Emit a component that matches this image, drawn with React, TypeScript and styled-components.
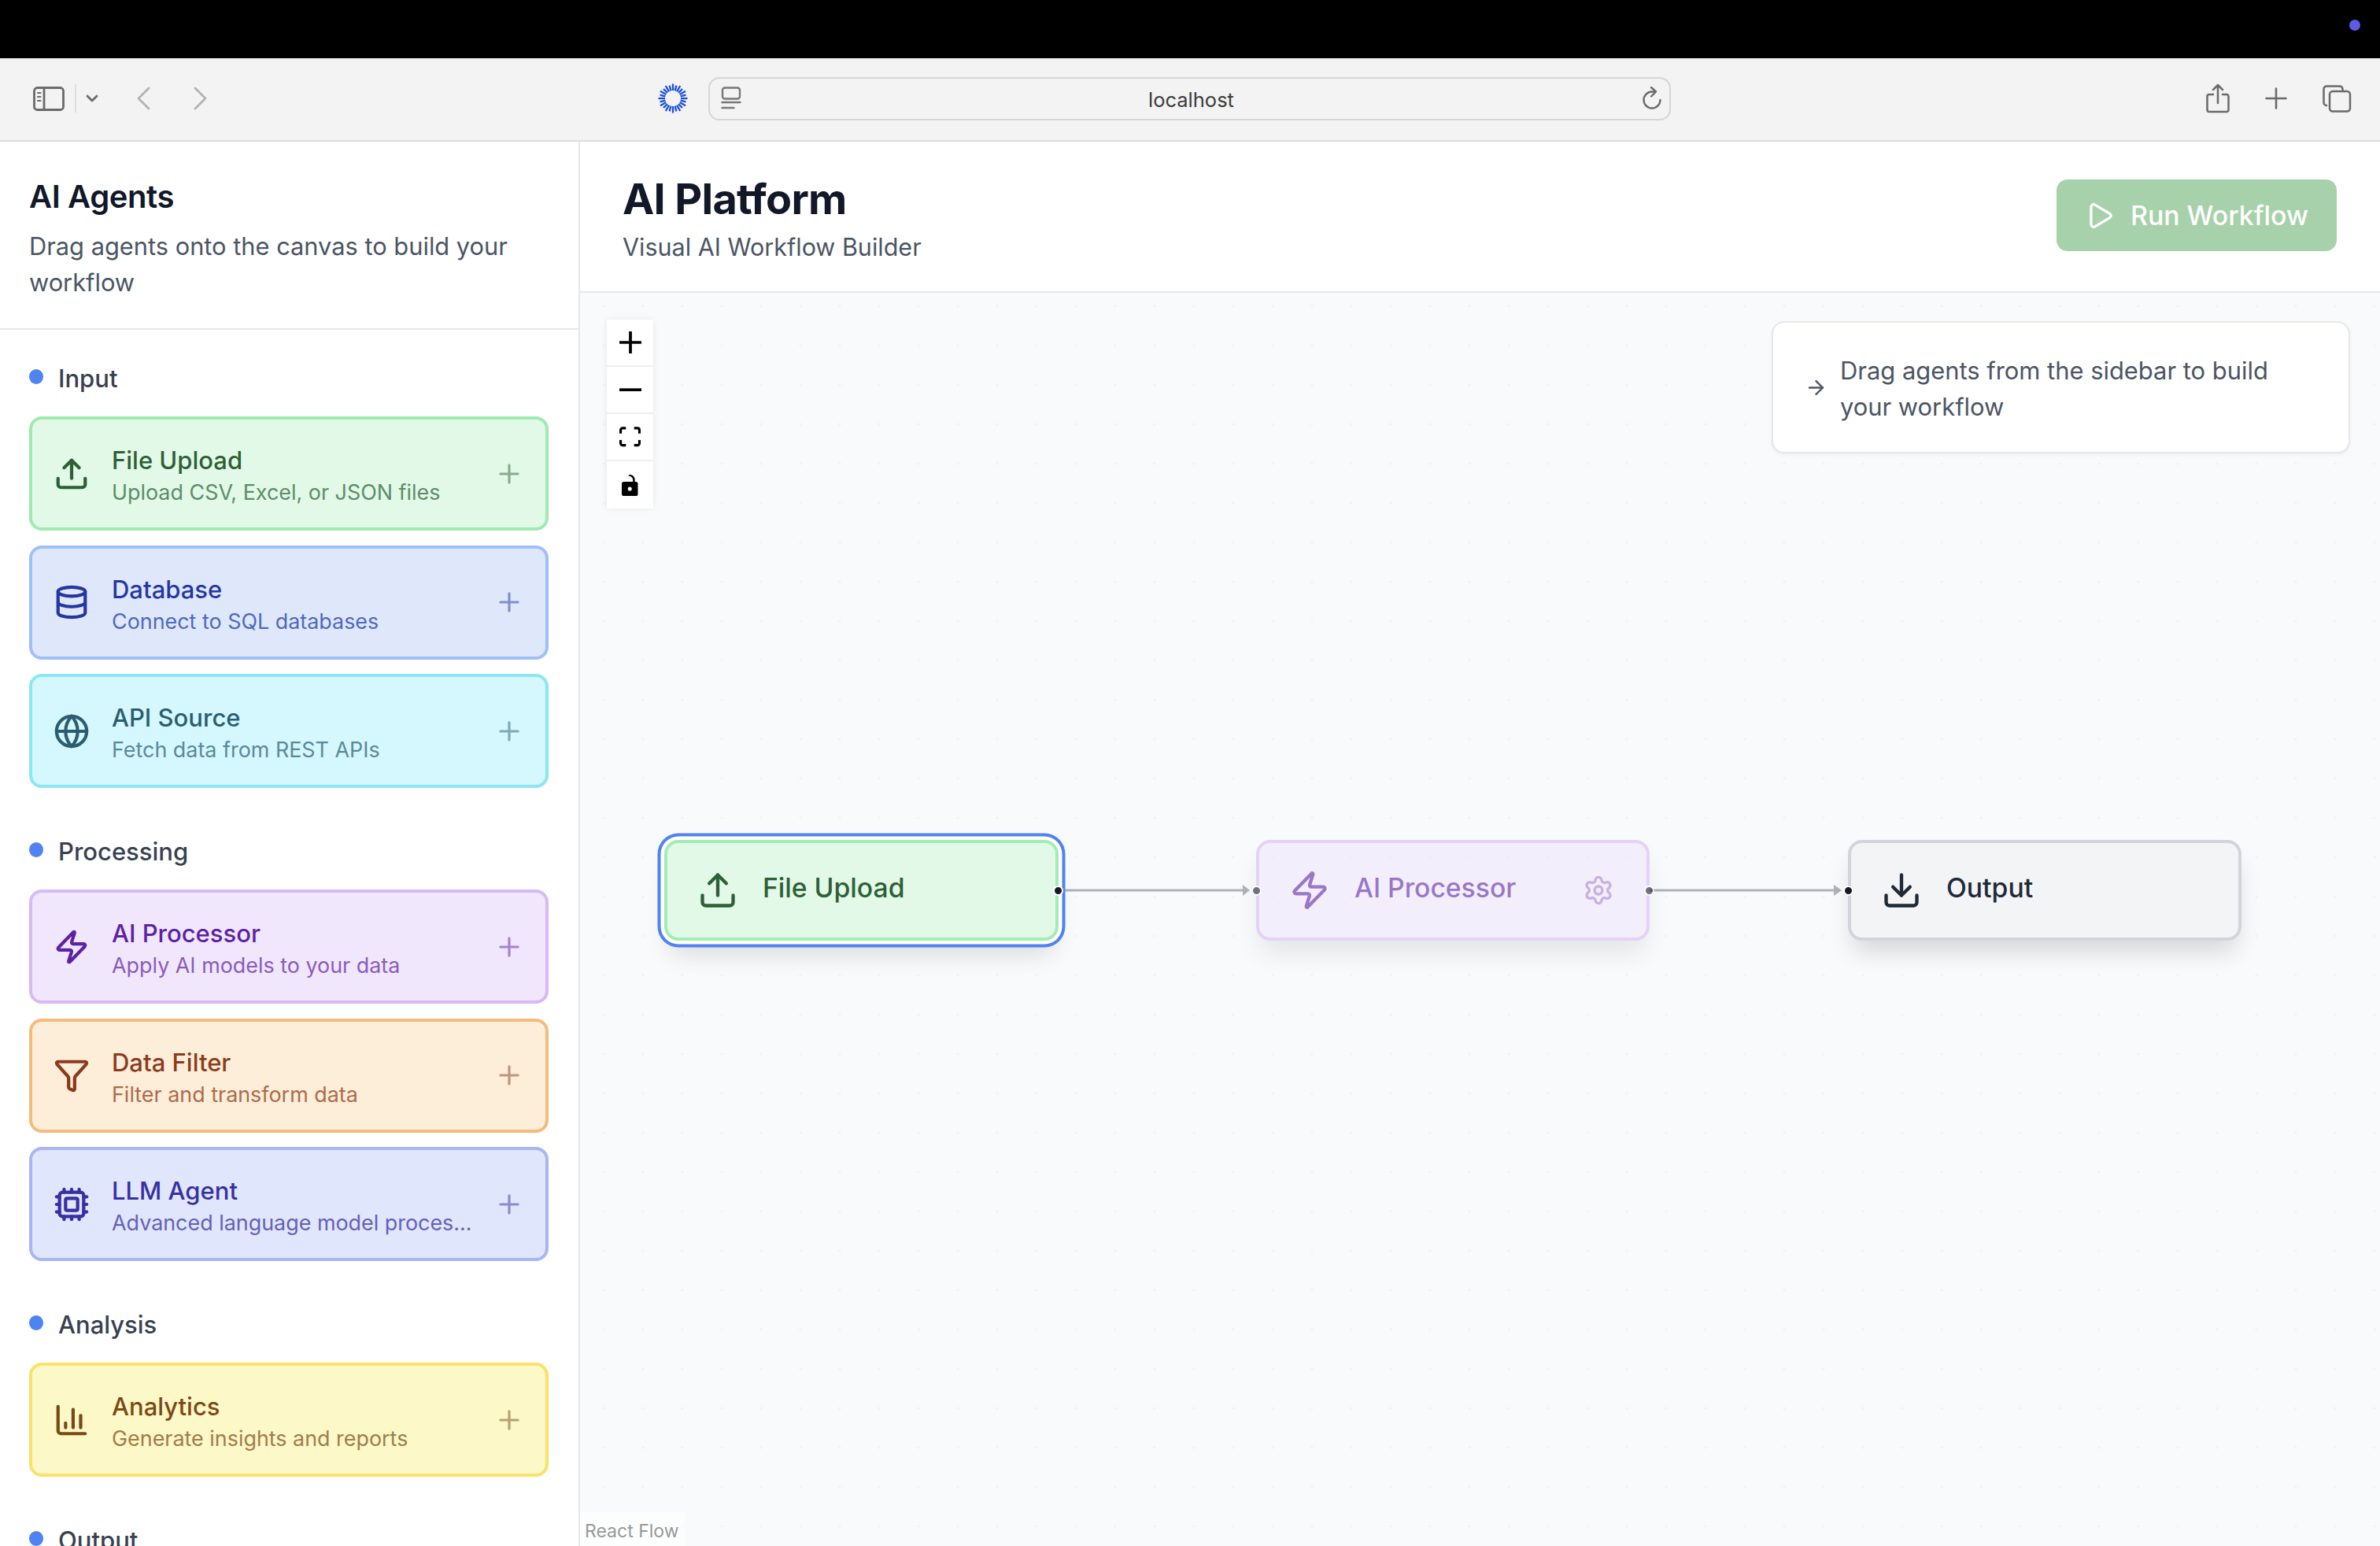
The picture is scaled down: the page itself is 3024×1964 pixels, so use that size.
import React from "react";
import styled, { createGlobalStyle } from "styled-components";
import {
  ArrowRight,
  ChartColumn,
  Cpu,
  Database,
  Download,
  Funnel,
  Globe,
  Play,
  Plus,
  Settings,
  Upload,
  Zap,
} from "lucide-react";

const GlobalStyle = createGlobalStyle`
  html, body {
    margin: 0;
    padding: 0;
    width: 3024px;
    height: 1964px;
    overflow: hidden;
    background: #fff;
    font-family: Inter, "Liberation Sans", sans-serif;
  }
  * { box-sizing: border-box; }
`;

const Page = styled.div`
  width: 3024px;
  height: 1964px;
  display: flex;
  flex-direction: column;
  overflow: hidden;
`;

const MenuBar = styled.div`
  height: 74px;
  flex: none;
  background: #000;
  display: flex;
  justify-content: flex-end;
  align-items: flex-start;
  padding: 25px 25px 0 0;
`;

const RecordingDot = styled.span`
  width: 14px;
  height: 14px;
  border-radius: 50%;
  background: #5e5ce6;
`;

const Toolbar = styled.div`
  height: 106px;
  flex: none;
  background: #f3f3f3;
  border-bottom: 2px solid #dcdcdc;
  display: flex;
  align-items: center;
  padding: 0 36px 2px 42px;
`;

const ToolGroup = styled.div<{ $gap?: number; $left?: number }>`
  display: flex;
  align-items: center;
  flex: none;
  gap: ${(p) => p.$gap ?? 0}px;
  margin-left: ${(p) => p.$left ?? 0}px;
`;

const ToolDivider = styled.span`
  width: 2px;
  height: 36px;
  background: #dedede;
  margin: 0 12px;
`;

const AddressBar = styled.div`
  width: 1223px;
  height: 55px;
  flex: none;
  margin-left: 26px;
  margin-right: 680px;
  border: 2px solid #d6d6d6;
  border-radius: 14px;
  display: flex;
  align-items: center;
  justify-content: space-between;
  padding: 0 8px 0 14px;
`;

const AddressText = styled.span`
  font-size: 25.5px;
  color: #3c3c3c;
  margin-top: 2px;
`;

const ToolIcon = styled.svg`
  display: block;
  flex: none;
  fill: none;
  stroke-linecap: round;
  stroke-linejoin: round;
`;

const Workspace = styled.div`
  flex: 1;
  min-height: 0;
  display: flex;
`;

const Sidebar = styled.aside`
  width: 737px;
  flex: none;
  border-right: 2px solid #e5e7eb;
  background: #fff;
  overflow: hidden;
`;

const SidebarHeader = styled.div`
  height: 239px;
  border-bottom: 2px solid #e5e7eb;
  padding: 45px 37px 0;
`;

const SidebarTitle = styled.h2`
  margin: 0 0 15px;
  font-size: 40px;
  line-height: 50px;
  font-weight: 600;
  color: #111827;
  letter-spacing: -0.4px;
`;

const SidebarText = styled.p`
  margin: 0;
  font-size: 30.8px;
  line-height: 46px;
  color: #4b5563;
`;

const SidebarBody = styled.div`
  padding: 38px 38px 0 37px;
  display: flex;
  flex-direction: column;
  gap: 57px;
`;

const Section = styled.section`
  display: flex;
  flex-direction: column;
  gap: 26px;
`;

const SectionLabel = styled.div`
  display: flex;
  align-items: center;
  gap: 19px;
  height: 46px;
  font-size: 31px;
  font-weight: 500;
  color: #374151;
`;

const SectionDot = styled.span`
  width: 18px;
  height: 19px;
  border-radius: 50%;
  background: #4f83f1;
  margin-top: -3px;
`;

const CardList = styled.div`
  display: flex;
  flex-direction: column;
  gap: 18.5px;
`;

const Card = styled.div<{ $bg: string; $border: string }>`
  height: 145px;
  display: flex;
  align-items: center;
  gap: 28px;
  padding: 0 27px;
  background: ${(p) => p.$bg};
  border: 4px solid ${(p) => p.$border};
  border-radius: 16px;
`;

const CardIcon = styled.span<{ $color: string }>`
  display: flex;
  flex: none;
  color: ${(p) => p.$color};
`;

const CardText = styled.div`
  flex: 1;
  min-width: 0;
  display: flex;
  flex-direction: column;
  gap: 2px;
  padding-top: 7px;
`;

const CardTitle = styled.div<{ $color: string }>`
  font-size: 31px;
  line-height: 38px;
  font-weight: 500;
  color: ${(p) => p.$color};
`;

const CardDesc = styled.div<{ $color: string }>`
  font-size: 26.9px;
  line-height: 38px;
  color: ${(p) => p.$color};
  white-space: nowrap;
  overflow: hidden;
  text-overflow: ellipsis;
`;

const CardPlus = styled.span<{ $color: string }>`
  display: flex;
  flex: none;
  margin-left: -8px;
  color: ${(p) => p.$color};
  opacity: 0.5;
`;

const Main = styled.main`
  flex: 1;
  min-width: 0;
  display: flex;
  flex-direction: column;
`;

const MainHeader = styled.header`
  height: 192px;
  flex: none;
  border-bottom: 2px solid #e5e7eb;
  background: #fff;
  display: flex;
  align-items: center;
  justify-content: space-between;
  padding: 0 55px 0 54px;
`;

const TitleBlock = styled.div`
  padding-top: 8px;
`;

const MainTitle = styled.h1`
  margin: 0 0 6px;
  font-size: 54px;
  line-height: 64px;
  font-weight: 700;
  color: #111827;
  letter-spacing: -0.7px;
`;

const MainSubtitle = styled.div`
  font-size: 30.5px;
  line-height: 46px;
  color: #4b5563;
`;

const RunButton = styled.button`
  width: 356px;
  height: 91px;
  margin-bottom: 3px;
  display: flex;
  align-items: center;
  justify-content: center;
  gap: 20px;
  border: 0;
  border-radius: 14px;
  background: #a7d1aa;
  color: #fff;
  font-family: inherit;
  font-size: 33.8px;
  font-weight: 500;
`;

const Canvas = styled.div`
  position: relative;
  flex: 1;
  min-height: 0;
  background-color: #f9fafb;
  background-image: radial-gradient(circle, #f0f1f4 1.2px, transparent 1.8px);
  background-size: 50px 50px;
  background-position: 5px -8px;
  overflow: hidden;
`;

const Controls = styled.div`
  position: absolute;
  left: 34px;
  top: 34px;
  width: 59px;
  display: flex;
  flex-direction: column;
  box-shadow: 0 0 8px rgba(0, 0, 0, 0.08);
`;

const ControlButton = styled.div`
  height: 60px;
  display: flex;
  align-items: center;
  justify-content: center;
  background: #fff;
  border-bottom: 2px solid #eee;

  &:last-child {
    border-bottom: 0;
  }

  svg {
    display: block;
    fill: #000;
  }
`;

const InfoPanel = styled.div`
  position: absolute;
  left: 1514px;
  top: 36px;
  width: 735px;
  height: 168px;
  display: flex;
  align-items: center;
  gap: 16px;
  padding: 0 38px 0 40px;
  background: #fff;
  border: 2px solid #e5e7eb;
  border-radius: 16px;
  box-shadow: 0 2px 4px rgba(0, 0, 0, 0.06);
  color: #4b5563;
  font-size: 30.9px;
  line-height: 46px;
`;

const InfoText = styled.span`
  padding-top: 3px;
`;

const Node = styled.div<{ $x: number; $bg: string; $border: string; $color: string; $faded?: boolean; $selected?: boolean }>`
  position: absolute;
  left: ${(p) => p.$x}px;
  top: 695px;
  width: ${(p) => (p.$selected ? 501 : 500)}px;
  height: 128px;
  display: flex;
  align-items: center;
  gap: 31px;
  padding: 0 38px;
  background: ${(p) => p.$bg};
  border: 4px solid ${(p) => p.$border};
  border-radius: 18px;
  color: ${(p) => p.$color};
  opacity: ${(p) => (p.$faded ? 0.6 : 1)};
  box-shadow: ${(p) =>
    p.$selected
      ? "0 0 0 4.5px #fff, 0 0 0 8.5px #5083f0, 0 24px 30px -6px rgba(0, 0, 0, 0.12)"
      : "0 20px 30px -6px rgba(0, 0, 0, 0.14)"};
`;

const NodeLabel = styled.span`
  flex: 1;
  font-size: 33.7px;
  font-weight: 500;
  margin-top: -7px;
`;

const NodeGear = styled.span`
  display: flex;
  opacity: 0.5;
  margin-right: 3px;
`;

const Handle = styled.span<{ $side: "left" | "right" }>`
  position: absolute;
  top: 50%;
  ${(p) => p.$side}: -10px;
  width: 13px;
  height: 13px;
  margin-top: -6.5px;
  background: #1a192b;
  border: 2px solid #fff;
  border-radius: 50%;
`;

const Edges = styled.svg`
  position: absolute;
  left: 0;
  top: 0;
  pointer-events: none;
`;

const Attribution = styled.div`
  position: absolute;
  left: 0;
  bottom: 0;
  padding: 4px 7px 0 6px;
  height: 43px;
  display: flex;
  align-items: center;
  background: rgba(255, 255, 255, 0.5);
  color: #999;
  font-size: 23px;
`;

type Tone = { bg: string; border: string; title: string; desc: string };

const tones: Record<string, Tone> = {
  green: { bg: "#e2f9e8", border: "#a0eab0", title: "#2d6036", desc: "#5e8c68" },
  blue: { bg: "#dfe8fb", border: "#9fc0f7", title: "#2536a3", desc: "#5068c0" },
  cyan: { bg: "#d5f7fe", border: "#8ce6f5", title: "#2a5d72", desc: "#5a8a9a" },
  purple: { bg: "#f0e7fc", border: "#d7b9f7", title: "#5b21a6", desc: "#8a5bbd" },
  orange: { bg: "#fdeed9", border: "#f3bc7c", title: "#8c3a1c", desc: "#ab6c4d" },
  indigo: { bg: "#e0e6fb", border: "#a9b6f4", title: "#3730a3", desc: "#6560b8" },
  yellow: { bg: "#fdf8c8", border: "#fbe16a", title: "#7a4a14", desc: "#a07d48" },
};

const sections = [
  {
    name: "Input",
    agents: [
      { title: "File Upload", desc: "Upload CSV, Excel, or JSON files", icon: Upload, tone: tones.green },
      { title: "Database", desc: "Connect to SQL databases", icon: Database, tone: tones.blue },
      { title: "API Source", desc: "Fetch data from REST APIs", icon: Globe, tone: tones.cyan },
    ],
  },
  {
    name: "Processing",
    agents: [
      { title: "AI Processor", desc: "Apply AI models to your data", icon: Zap, tone: tones.purple },
      { title: "Data Filter", desc: "Filter and transform data", icon: Funnel, tone: tones.orange },
      { title: "LLM Agent", desc: "Advanced language model processing and generation", icon: Cpu, tone: tones.indigo },
    ],
  },
  {
    name: "Analysis",
    agents: [{ title: "Analytics", desc: "Generate insights and reports", icon: ChartColumn, tone: tones.yellow }],
  },
  { name: "Output", agents: [] },
];

const Sunburst = () => {
  const rays = Array.from({ length: 24 }, (_, i) => (i * 360) / 24);
  return (
    <ToolIcon width="38" height="38" viewBox="0 0 38 38" stroke="#1d4fd8" strokeWidth="2.3">
      {rays.map((deg, i) => (
        <line key={deg} x1="19" y1={i % 2 ? 2 : 0.5} x2="19" y2="9" strokeLinecap="butt" transform={`rotate(${deg} 19 19)`} />
      ))}
    </ToolIcon>
  );
};

const App = () => (
  <Page>
    <GlobalStyle />
    <MenuBar>
      <RecordingDot />
    </MenuBar>
    <Toolbar>
      <ToolGroup>
        <ToolIcon width="41" height="31" viewBox="0 0 41 31" stroke="#6a6a6a" strokeWidth="2.8">
          <rect x="1.5" y="1.5" width="37" height="28" rx="4" />
          <path d="M14 1.5v28" />
          <path d="M6 8h3.5M6 13h3.5M6 18h3.5" strokeWidth="2" />
        </ToolIcon>
        <ToolDivider />
        <ToolIcon width="16" height="12" viewBox="0 0 16 12" stroke="#6a6a6a" strokeWidth="2.8">
          <path d="M2 3l6 6 6-6" />
        </ToolIcon>
      </ToolGroup>
      <ToolGroup $gap={55} $left={49}>
        <ToolIcon width="17" height="30" viewBox="0 0 17 30" stroke="#b2b2b2" strokeWidth="2.8">
          <path d="M15 2L2 15l13 13" />
        </ToolIcon>
        <ToolIcon width="17" height="30" viewBox="0 0 17 30" stroke="#b2b2b2" strokeWidth="2.8">
          <path d="M2 2l13 13L2 28" />
        </ToolIcon>
      </ToolGroup>
      <ToolGroup $left={573}>
        <Sunburst />
      </ToolGroup>
      <AddressBar>
        <ToolIcon width="26" height="30" viewBox="0 0 26 30" stroke="#777" strokeWidth="2.4">
          <rect x="2" y="1.5" width="22" height="14" rx="3" />
          <path d="M1.5 20h23M1.5 27h15" />
        </ToolIcon>
        <AddressText>localhost</AddressText>
        <ToolIcon width="28" height="30" viewBox="0 0 28 30" stroke="#6a6a6a" strokeWidth="2.4">
          <path d="M17 6.5h-3A10.5 10.5 0 1 0 24.5 17" />
          <path d="M13 1l6 5.5-6 6" />
        </ToolIcon>
      </AddressBar>
      <ToolGroup $gap={45}>
        <ToolIcon width="30" height="38" viewBox="0 0 30 38" stroke="#6a6a6a" strokeWidth="2.5">
          <path d="M9 14H4a2.5 2.5 0 0 0-2.5 2.5v17A2.5 2.5 0 0 0 4 36h22a2.5 2.5 0 0 0 2.5-2.5v-17A2.5 2.5 0 0 0 26 14h-5" />
          <path d="M15 25V2M9 8l6-6 6 6" />
        </ToolIcon>
        <ToolIcon width="28" height="28" viewBox="0 0 28 28" stroke="#6a6a6a" strokeWidth="2.6">
          <path d="M14 1.5v25M1.5 14h25" />
        </ToolIcon>
        <ToolIcon width="37" height="35" viewBox="0 0 37 35" stroke="#6a6a6a" strokeWidth="2.5">
          <rect x="9" y="8" width="26" height="25.5" rx="4" />
          <path d="M5 26H5a3.5 3.5 0 0 1-3.5-3.5V5A3.5 3.5 0 0 1 5 1.5h17A3.5 3.5 0 0 1 25.5 5v3" />
        </ToolIcon>
      </ToolGroup>
    </Toolbar>
    <Workspace>
      <Sidebar>
        <SidebarHeader>
          <SidebarTitle>AI Agents</SidebarTitle>
          <SidebarText>Drag agents onto the canvas to build your workflow</SidebarText>
        </SidebarHeader>
        <SidebarBody>
          {sections.map((section) => (
            <Section key={section.name}>
              <SectionLabel>
                <SectionDot />
                {section.name}
              </SectionLabel>
              <CardList>
                {section.agents.map((agent) => {
                  const Icon = agent.icon;
                  return (
                    <Card key={agent.title} $bg={agent.tone.bg} $border={agent.tone.border}>
                      <CardIcon $color={agent.tone.title}>
                        <Icon size={46} strokeWidth={2.2} />
                      </CardIcon>
                      <CardText>
                        <CardTitle $color={agent.tone.title}>{agent.title}</CardTitle>
                        <CardDesc $color={agent.tone.desc}>{agent.desc}</CardDesc>
                      </CardText>
                      <CardPlus $color={agent.tone.title}>
                        <Plus size={38} strokeWidth={2} />
                      </CardPlus>
                    </Card>
                  );
                })}
              </CardList>
            </Section>
          ))}
        </SidebarBody>
      </Sidebar>
      <Main>
        <MainHeader>
          <TitleBlock>
            <MainTitle>AI Platform</MainTitle>
            <MainSubtitle>Visual AI Workflow Builder</MainSubtitle>
          </TitleBlock>
          <RunButton>
            <Play size={38} strokeWidth={2} />
            Run Workflow
          </RunButton>
        </MainHeader>
        <Canvas>
          <Controls>
            <ControlButton>
              <svg width="28" height="28" viewBox="0 0 32 32">
                <path d="M32 18.133H18.133V32h-4.266V18.133H0v-4.266h13.867V0h4.266v13.867H32z" />
              </svg>
            </ControlButton>
            <ControlButton>
              <svg width="28" height="5" viewBox="0 0 32 5">
                <path d="M0 0h32v4.2H0z" />
              </svg>
            </ControlButton>
            <ControlButton>
              <svg width="27" height="26" viewBox="0 0 32 30">
                <path d="M3.692 4.63c0-.53.4-.938.939-.938h5.215V0H4.708C2.13 0 0 2.054 0 4.63v5.216h3.692V4.631zM27.354 0h-5.2v3.692h5.17c.53 0 .984.4.984.939v5.215H32V4.631A4.624 4.624 0 0027.354 0zm.954 24.83c0 .532-.4.94-.939.94h-5.215v3.768h5.215c2.577 0 4.631-2.13 4.631-4.707v-5.139h-3.692v5.139zm-23.677.94c-.531 0-.939-.4-.939-.94v-5.138H0v5.139c0 2.577 2.13 4.707 4.708 4.707h5.138V25.77H4.631z" />
              </svg>
            </ControlButton>
            <ControlButton>
              <svg width="21" height="27" viewBox="0 0 25 32">
                <path d="M21.333 10.667H19.81V7.619C19.81 3.429 16.38 0 12.19 0c-4.114 1.828-1.37 2.133.305 2.438 1.676.305 4.42 2.59 4.42 5.181v3.048H3.047A3.056 3.056 0 000 13.714v15.238A3.056 3.056 0 003.048 32h18.285a3.056 3.056 0 003.048-3.048V13.714a3.056 3.056 0 00-3.048-3.047zM12.19 24.533a3.056 3.056 0 01-3.047-3.047 3.056 3.056 0 013.047-3.048 3.056 3.056 0 013.048 3.048 3.056 3.056 0 01-3.048 3.047z" />
              </svg>
            </ControlButton>
          </Controls>
          <InfoPanel>
            <ArrowRight size={29} strokeWidth={2} style={{ flex: "none" }} />
            <InfoText>Drag agents from the sidebar to build your workflow</InfoText>
          </InfoPanel>
          <Edges width="2287" height="1592" viewBox="0 0 2287 1592">
            <path d="M608 759H845" stroke="#b1b1b7" strokeWidth="3" fill="none" />
            <path d="M842 752l9 7-9 7z" fill="#b1b1b7" />
            <path d="M1359 759H1596" stroke="#b1b1b7" strokeWidth="3" fill="none" />
            <path d="M1593 752l10 7-10 7z" fill="#b1b1b7" />
          </Edges>
          <Node $x={107} $bg={tones.green.bg} $border="#a3edb3" $color="#2d6036" $selected>
            <Upload size={52} strokeWidth={2} style={{ flex: "none" }} />
            <NodeLabel>File Upload</NodeLabel>
            <Handle $side="right" />
          </Node>
          <Node $x={859} $bg={tones.purple.bg} $border={tones.purple.border} $color="#5b21a6" $faded>
            <Zap size={52} strokeWidth={2} style={{ flex: "none" }} />
            <NodeLabel>AI Processor</NodeLabel>
            <NodeGear>
              <Settings size={40} strokeWidth={2} />
            </NodeGear>
            <Handle $side="left" />
            <Handle $side="right" />
          </Node>
          <Node $x={1611} $bg="#f3f4f6" $border="#d1d5db" $color="#1f2937">
            <Download size={52} strokeWidth={2} style={{ flex: "none" }} />
            <NodeLabel>Output</NodeLabel>
            <Handle $side="left" />
          </Node>
          <Attribution>React Flow</Attribution>
        </Canvas>
      </Main>
    </Workspace>
  </Page>
);

export default App;
